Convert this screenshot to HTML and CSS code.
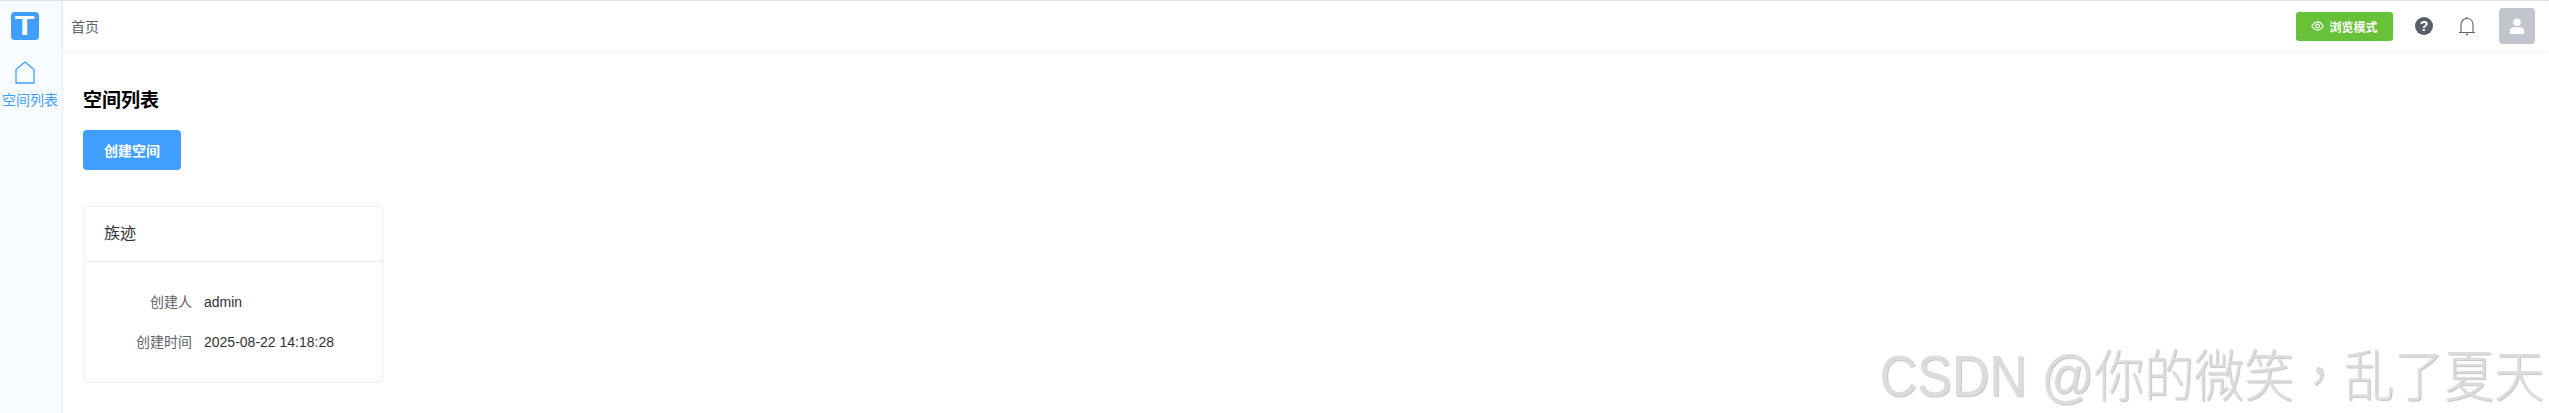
FILE: index.html
```html
<!DOCTYPE html>
<html>
<head>
  <title>空间列表</title>
  <link rel="stylesheet" href="styles.css">
</head>
<body>
  <div class="layout">
    <aside class="sidebar">
      <div class="logo"><span class="logo-t">T</span></div>
      <div class="menu-item">
        <svg class="menu-icon" viewBox="0 0 20 23" width="20" height="23">
          <path d="M1 8.5 L10 1 L19 8.5 V22 H1 Z" fill="none" stroke="#409eff" stroke-width="1.3" stroke-linejoin="round"/>
        </svg>
        <div class="menu-text">空间列表</div>
      </div>
    </aside>

    <div class="main">
      <header class="topbar">
        <div class="crumb">首页</div>
        <div class="topbar-right">
          <button class="btn-view">
            <svg viewBox="0 0 16 12" width="13" height="10">
              <path d="M1 6 C3.5 2 5.5 1 8 1 C10.5 1 12.5 2 15 6 C12.5 10 10.5 11 8 11 C5.5 11 3.5 10 1 6 Z" fill="none" stroke="#fff" stroke-width="1.4"/>
              <circle cx="8" cy="6" r="2.3" fill="none" stroke="#fff" stroke-width="1.4"/>
            </svg>
            <span>浏览模式</span>
          </button>
          <div class="help">?</div>
          <svg class="bell" viewBox="0 0 18 20" width="18" height="20">
            <path d="M1 16.5 H17 M3 16.5 V9 C3 5 5.5 2.5 9 2.5 C12.5 2.5 15 5 15 9 V16.5" fill="none" stroke="#606266" stroke-width="1.1"/>
            <path d="M9 1 V2.5" stroke="#606266" stroke-width="1.1"/>
            <circle cx="9" cy="18.5" r="1" fill="#606266"/>
          </svg>
          <div class="avatar">
            <svg viewBox="0 0 16 16" width="16" height="16">
              <circle cx="8" cy="4.2" r="3.8" fill="#fff"/>
              <path d="M0.8 16 V12.8 C0.8 10.5 2.8 9.2 5 9.2 H11 C13.2 9.2 15.2 10.5 15.2 12.8 V16 Z" fill="#fff"/>
            </svg>
          </div>
        </div>
      </header>

      <main class="content">
        <h1 class="page-title">空间列表</h1>
        <button class="btn-create">创建空间</button>

        <div class="card">
          <div class="card-header">族迹</div>
          <div class="card-body">
            <div class="row">
              <div class="row-label">创建人</div>
              <div class="row-value">admin</div>
            </div>
            <div class="row">
              <div class="row-label">创建时间</div>
              <div class="row-value">2025-08-22 14:18:28</div>
            </div>
          </div>
        </div>
      </main>
    </div>
  </div>

  <div class="watermark"><span class="wm-latin">CSDN @</span>你的微笑<span class="wm-comma">，</span>乱了夏天</div>
</body>
</html>
```

FILE: styles.css
```css
html, body {
  margin: 0;
  height: 413px;
  overflow: hidden;
  background: #fff;
  font-family: "Liberation Sans", "Noto Sans CJK SC", sans-serif;
}

.layout {
  display: flex;
  height: 413px;
  border-top: 1px solid #e4e4e4;
  box-sizing: border-box;
}

.sidebar {
  width: 62px;
  flex-shrink: 0;
  background: #f8fbff;
  border-right: 1px solid #e9edf5;
}

.logo {
  width: 28px;
  height: 28px;
  margin: 11px 0 0 11px;
  background: #409eff;
  border-radius: 4px;
  display: flex;
  align-items: center;
  justify-content: center;
}

.logo-t {
  color: #fff;
  font-size: 28px;
  font-weight: bold;
  line-height: 28px;
  transform: scaleX(1.15);
}

.menu-item {
  margin-top: 21px;
}

.menu-icon {
  display: block;
  margin-left: 15px;
}

.menu-text {
  margin: 8px 0 0 2px;
  font-size: 14px;
  line-height: 16px;
  color: #409eff;
}

.main {
  flex: 1;
  min-width: 0;
}

.topbar {
  height: 50px;
  padding: 0 14px 0 8px;
  display: flex;
  align-items: center;
  justify-content: space-between;
  box-shadow: 0 1px 4px rgba(0, 21, 41, 0.08);
}

.crumb {
  font-size: 14px;
  color: #606266;
}

.topbar-right {
  display: flex;
  align-items: center;
}

.btn-view {
  width: 97px;
  height: 29px;
  margin-right: 22px;
  padding: 0;
  border: none;
  border-radius: 3px;
  background: #67c23a;
  color: #fff;
  font-family: inherit;
  font-size: 12px;
  font-weight: bold;
  display: flex;
  align-items: center;
  justify-content: center;
  gap: 5px;
}

.help {
  width: 18px;
  height: 18px;
  border-radius: 50%;
  background: #5a5e66;
  color: #fff;
  font-size: 14px;
  font-weight: bold;
  line-height: 18px;
  text-align: center;
  margin-right: 25px;
}

.bell {
  margin-right: 23px;
}

.avatar {
  width: 36px;
  height: 36px;
  border-radius: 4px;
  background: #c0c4cc;
  display: flex;
  align-items: center;
  justify-content: center;
}

.content {
  padding: 36px 0 0 20px;
}

.page-title {
  margin: 0;
  font-size: 19px;
  line-height: 27px;
  font-weight: bold;
  color: #000;
}

.btn-create {
  display: block;
  width: 98px;
  height: 40px;
  margin-top: 16px;
  padding: 0;
  border: none;
  border-radius: 4px;
  background: #409eff;
  color: #fff;
  font-family: inherit;
  font-size: 14px;
  font-weight: bold;
}

.card {
  width: 300px;
  height: 177px;
  margin-top: 36px;
  border: 1px solid #ebeef5;
  border-radius: 4px;
  box-sizing: border-box;
}

.card-header {
  height: 54px;
  padding-left: 20px;
  border-bottom: 1px solid #ebeef5;
  font-size: 16px;
  line-height: 54px;
  color: #303133;
}

.card-body {
  padding-top: 20px;
}

.row {
  display: flex;
  height: 40px;
  font-size: 14px;
  line-height: 40px;
}

.row-label {
  width: 120px;
  padding-right: 12px;
  box-sizing: border-box;
  text-align: right;
  color: #606266;
}

.row-value {
  color: #303133;
}

.watermark {
  position: absolute;
  right: 5px;
  top: 344px;
  font-size: 50px;
  line-height: 56px;
  font-weight: 300;
  color: #dcdcdc;
  white-space: nowrap;
  transform: scaleY(1.12);
  text-shadow: 1px 1px 1px #c4c4c4;
}

.wm-latin {
  font-family: "Liberation Sans Narrow", "Liberation Sans", sans-serif;
  font-size: 52px;
}

.wm-comma {
  font-family: "Noto Sans CJK TC", sans-serif;
}
```
